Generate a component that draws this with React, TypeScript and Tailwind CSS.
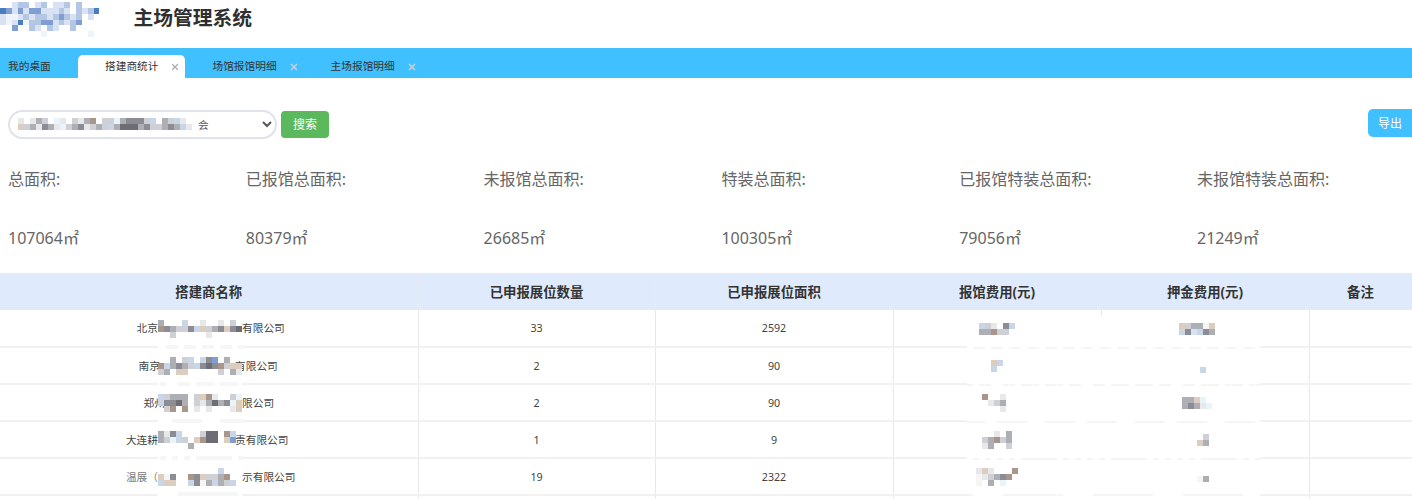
import { X } from "lucide-react"

const palette: Record<string, string> = {
  a: "#4a7cc0", b: "#7f9fd2", c: "#b3c6e4", d: "#d8e2f2", e: "#eff3fa",
  g: "#8b8c94", h: "#aeafb5", i: "#cfd0d5", j: "#e7e8ea", k: "#6c6d75",
  t: "#dccdbf", u: "#c8d6e7", v: "#a8968b", w: "#f5f5f3", x: "#e9f4fa",
}

// pixelated (censored) patches from the original screenshot
function Mosaic({ rows, cell = 5.9, className = "" }: { rows: string[]; cell?: number; className?: string }) {
  const width = rows[0].length * cell
  const height = rows.length * cell
  return (
    <svg width={width} height={height} className={`shrink-0 ${className}`} shapeRendering="crispEdges">
      {rows.map((row, y) =>
        row.split("").map((c, x) =>
          palette[c] ? <rect key={`${x}-${y}`} x={x * cell} y={y * cell} width={cell} height={cell} fill={palette[c]} /> : null
        )
      )}
    </svg>
  )
}

// white smear the censoring left over the grid lines
function Whiteout() {
  const lines = [71, 108, 145, 182, 218]
  const speckle = (i: number, j: number) => (i * 7 + j * 13 + ((i * j) % 5)) % 3 !== 0
  return (
    <svg className="absolute left-0 top-[276px] pointer-events-none" width={1412} height={226} shapeRendering="crispEdges">
      <rect x={1098} y={40} width={6} height={172} fill="#ffffff" />
      {lines.map((y, j) => (
        <g key={y}>
          <rect x={967} y={y - 6} width={293} height={12} fill="#ffffff" />
          <rect x={158} y={y - 5} width={84} height={10} fill="#ffffff" />
          {Array.from({ length: 49 }).map((_, i) =>
            speckle(i, j) ? <rect key={i} x={967 + i * 6} y={y} width={6} height={2} fill="#f5f5f5" /> : null
          )}
          {Array.from({ length: 14 }).map((_, i) =>
            speckle(i + 3, j) ? <rect key={i} x={160 + i * 6} y={y - 2} width={6} height={4} fill="#f6f6f6" /> : null
          )}
        </g>
      ))}
    </svg>
  )
}

const tabs = [
  { name: "搭建商统计", active: true },
  { name: "场馆报馆明细", active: false },
  { name: "主场报馆明细", active: false },
]

const stats = [
  { label: "总面积:", value: "107064㎡" },
  { label: "已报馆总面积:", value: "80379㎡" },
  { label: "未报馆总面积:", value: "26685㎡" },
  { label: "特装总面积:", value: "100305㎡" },
  { label: "已报馆特装总面积:", value: "79056㎡" },
  { label: "未报馆特装总面积:", value: "21249㎡" },
]

const headers = ["搭建商名称", "已申报展位数量", "已申报展位面积", "报馆费用(元)", "押金费用(元)", "备注"]

const rows = [
  {
    before: "北京",
    beforeClass: "",
    after: "有限公司",
    afterClass: "",
    name: ["h...u..j..j.i.", "vghiigutihgtgk", "..i.....j....."],
    count: "33",
    area: "2592",
    fee: ["uij.gu", "hhvii."],
    deposit: ["tihhwt", "ugdugh"],
    depositClass: "-ml-4",
  },
  {
    before: "南京",
    beforeClass: "-mr-[2px]",
    after: "有限公司",
    afterClass: "-ml-[7px]",
    name: ["..h.iu.ugb.h..", "vuhghiugkgvitt", "ih.tt.....i.hj"],
    count: "2",
    area: "90",
    fee: ["tu", "u."],
    deposit: ["u"],
    depositClass: "mt-2 -ml-1",
  },
  {
    before: "郑州",
    beforeClass: "-mr-[7px]",
    after: "限公司",
    afterClass: "",
    name: ["uihhh.itvj..ix", "uggkh.ijhkhgxt", ".iv.v.j.j...jt"],
    count: "2",
    area: "90",
    fee: ["v..j.", ".jih.", "...j."],
    deposit: ["hhtx.", "hghjx"],
    depositClass: "-ml-4",
  },
  {
    before: "大连耕",
    beforeClass: "",
    after: "责有限公司",
    afterClass: "-ml-[7px]",
    name: ["hjgu...ikk.vu.", "hixui.tvkk.tb.", ".....h........"],
    count: "1",
    area: "9",
    fee: ["..j.h", "ihvih", "jh..i"],
    deposit: [".i", "th"],
    depositClass: "-ml-1",
  },
  {
    before: "温展（",
    beforeClass: "opacity-70",
    after: "示有限公司",
    afterClass: "",
    name: ["..........u...", "twg..vgtiihv..", "utt..ugwhuhiu."],
    count: "19",
    area: "2322",
    fee: ["jtj...v", "wjihgv.", "w.h.x.."],
    deposit: ["wh"],
    depositClass: "mt-1 -ml-1",
  },
]

export default function App() {
  return (
    <div className="relative h-[499px] w-[1412px] overflow-hidden bg-white font-['Noto_Sans','Noto_Sans_CJK_SC',sans-serif] text-[#333]">
      {/* logo + title */}
      <header className="flex h-12 items-start">
        <Mosaic
          className="mt-[2px]"
          cell={5.85}
          rows={[
            "..dcc.dc.ddc.c...",
            "abdbdbbdddcd.cdca",
            "deedcdccdcbcdc.d.",
            "dedaeccbbdcdcb...",
            "..b..cd.cd..c....",
            ".......e.......e.",
          ]}
        />
        <h1 className="ml-[34px] mt-[5px] text-[19.8px] font-bold leading-[26px] text-[#2f2f2f]">主场管理系统</h1>
      </header>

      {/* tabs */}
      <nav className="flex h-[30px] items-end bg-[#40c0ff] text-[10.7px] text-[#333]">
        <div className="flex h-[23px] w-[78px] items-center pl-2">我的桌面</div>
        {tabs.map((tab) => (
          <div
            key={tab.name}
            className={`flex h-[23px] items-center pl-[27px] ${tab.active ? "rounded-t-[5px] bg-white pr-[5px]" : "pr-[5px]"}`}
          >
            <span>{tab.name}</span>
            <X
              size={10}
              strokeWidth={tab.active ? 3 : 4}
              className={`ml-[12px] ${tab.active ? "text-[#adadad]" : "text-[#c9ced2]"}`}
            />
          </div>
        ))}
      </nav>

      {/* search row */}
      <div className="flex items-start justify-between pl-2 pt-[31px]">
        <div className="relative mt-px flex items-center gap-1">
          <select className="h-[29px] w-[269px] rounded-full border-2 border-[#e0e2ec] bg-white pl-[184px] text-[10.7px] text-[#555] outline-none">
            <option>会</option>
          </select>
          <Mosaic
            className="absolute left-[10px] top-[8px]"
            rows={["j.jhi.xj.ijhv.iixhgggiu.hiuj", "tihjghjxihgjihiuhkkkhgiihghuj"].map((r) => r.padEnd(30, ".").slice(0, 30))}
            cell={6}
          />
          <button className="h-[27px] w-[48px] rounded-[4px] bg-[#5cb85c] pt-px text-[12px] text-white">搜索</button>
        </div>
        <button className="-mr-2 h-[28px] w-[52px] rounded-[5px] bg-[#40c0ff] pr-2 pt-[2px] text-[12px] text-white">导出</button>
      </div>

      {/* totals */}
      <div className="mt-[28px] grid grid-cols-[repeat(6,237.8px)] pl-2 text-[#666]">
        {stats.map((stat) => (
          <div key={stat.label}>
            <div className="text-[16px] leading-[24px]">{stat.label}</div>
            <div className="mt-[35px] text-[16px] leading-[24px]">{stat.value}</div>
          </div>
        ))}
      </div>

      {/* table */}
      <table className="mt-[23px] w-[1412px] table-fixed border-collapse text-center">
        <colgroup>
          <col className="w-[418px]" />
          <col className="w-[237px]" />
          <col className="w-[238px]" />
          <col className="w-[208px]" />
          <col className="w-[208px]" />
          <col className="w-[103px]" />
        </colgroup>
        <thead>
          <tr className="h-[37px] bg-[#dfebfd] text-[13.4px] text-[#333]">
            {headers.map((h) => (
              <th key={h} className="border-r border-[#e6ebf2] p-0 pt-[2px] font-bold">
                {h}
              </th>
            ))}
          </tr>
        </thead>
        <tbody className="text-[10.7px] text-[#444]">
          {rows.map((row) => (
            <tr key={row.before} className="h-[37px]">
              <td className="border-b-2 border-r border-b-[#f1f1f1] border-r-[#e8e8e8] p-0 pt-px">
                <div className="flex items-center">
                  <div className="flex w-[158px] shrink-0 justify-end whitespace-nowrap">
                    <span className={row.beforeClass}>{row.before}</span>
                  </div>
                  <Mosaic rows={row.name} cell={6} className="relative z-10" />
                  <span className={`whitespace-nowrap ${row.afterClass}`}>{row.after}</span>
                </div>
              </td>
              <td className="border-b-2 border-r border-b-[#f1f1f1] border-r-[#e8e8e8] p-0 pt-px">{row.count}</td>
              <td className="border-b-2 border-r border-b-[#f1f1f1] border-r-[#e8e8e8] p-0 pt-px">{row.area}</td>
              <td className="border-b-2 border-r border-b-[#f1f1f1] border-r-[#e8e8e8] p-0 pt-px">
                <div className="flex justify-center">
                  <Mosaic rows={row.fee} cell={6} />
                </div>
              </td>
              <td className="border-b-2 border-r border-b-[#f1f1f1] border-r-[#e8e8e8] p-0 pt-px">
                <div className="flex justify-center">
                  <Mosaic rows={row.deposit} cell={6} className={row.depositClass} />
                </div>
              </td>
              <td className="border-b-2 border-r border-b-[#f1f1f1] border-r-[#e8e8e8] p-0"></td>
            </tr>
          ))}
          <tr className="h-[37px]">
            {headers.map((h) => (
              <td key={h} className="border-r border-[#e8e8e8] p-0"></td>
            ))}
          </tr>
        </tbody>
      </table>

      <Whiteout />
    </div>
  )
}
